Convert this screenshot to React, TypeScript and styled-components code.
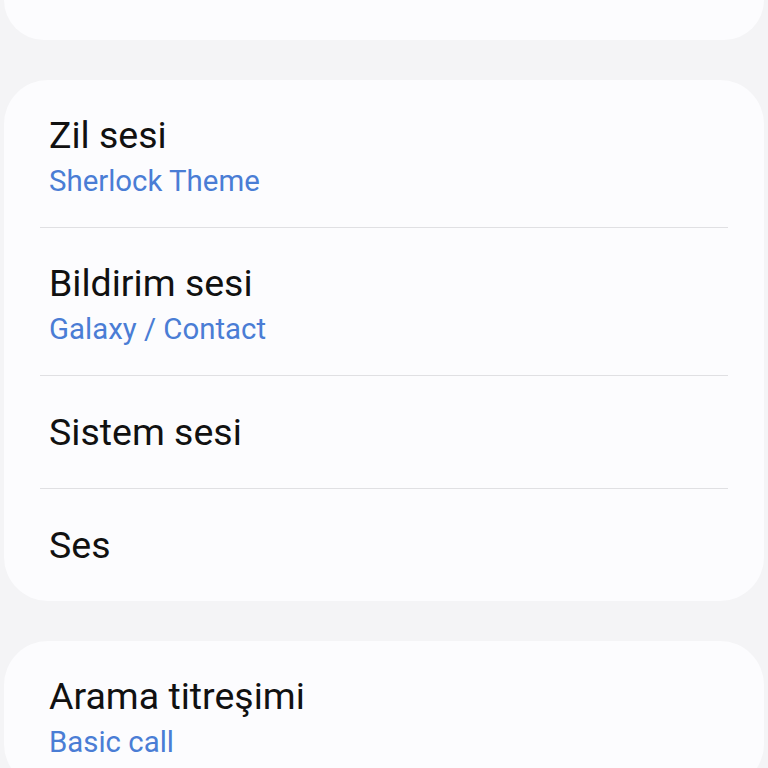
import styled, { createGlobalStyle } from "styled-components";

const GlobalStyle = createGlobalStyle`
  html, body {
    margin: 0;
    padding: 0;
    background: #f4f4f6;
    font-family: Roboto, "Noto Sans", "Liberation Sans", sans-serif;
  }
`;

const Page = styled.div`
  display: flex;
  flex-direction: column;
  gap: 40px;
  padding: 0 4px;
  height: 768px;
  overflow: hidden;
`;

const Card = styled.div<{ $clipped?: boolean }>`
  background: #fcfcfe;
  border-radius: ${(p) => (p.$clipped ? "0 0 44px 44px" : "44px")};
  flex-shrink: 0;
  ${(p) => (p.$clipped ? "height: 40px;" : "")}
`;

const Row = styled.div<{ $tall?: boolean }>`
  display: flex;
  flex-direction: column;
  justify-content: center;
  min-height: ${(p) => (p.$tall ? "147px" : "112px")};
  padding: ${(p) => (p.$tall ? "4px" : "0")} 45px 0;
  box-sizing: border-box;
`;

const Title = styled.div`
  font-size: 37.5px;
  line-height: 44px;
  color: #111;
`;

const Sub = styled.div`
  font-size: 29.4px;
  line-height: 34px;
  color: #4a7dd5;
  margin-top: 7px;
`;

const Divider = styled.div`
  height: 1px;
  background: #e0e0e3;
  margin: 0 36px;
`;

type Item = { title: string; sub?: string };

const sounds: Item[] = [
  { title: "Zil sesi", sub: "Sherlock Theme" },
  { title: "Bildirim sesi", sub: "Galaxy / Contact" },
  { title: "Sistem sesi" },
  { title: "Ses" },
];

const vibration: Item[] = [{ title: "Arama titreşimi", sub: "Basic call" }];

function Group({ items }: { items: Item[] }) {
  return (
    <Card>
      {items.map((it, i) => (
        <div key={it.title}>
          {i > 0 && <Divider />}
          <Row $tall={!!it.sub}>
            <Title>{it.title}</Title>
            {it.sub && <Sub>{it.sub}</Sub>}
          </Row>
        </div>
      ))}
    </Card>
  );
}

export default function App() {
  return (
    <>
      <GlobalStyle />
      <Page>
        <Card $clipped />
        <Group items={sounds} />
        <Group items={vibration} />
      </Page>
    </>
  );
}
